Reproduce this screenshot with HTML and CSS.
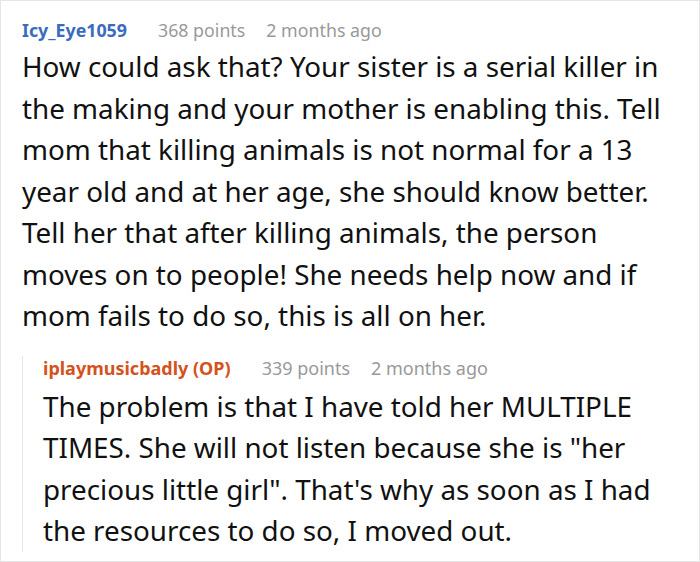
FILE: index.html
```html
<!DOCTYPE html>
<html>
<head>
<meta charset="utf-8">
<link rel="stylesheet" href="styles.css">
</head>
<body>
<div class="frame">
  <div class="comment">
    <div class="meta">
      <span class="user">Icy_Eye1059</span>
      <span class="info">368 points</span>
      <span class="info">2 months ago</span>
    </div>
    <p class="text">How could ask that? Your sister is a serial killer in the making and your mother is enabling this. Tell mom that killing animals is not normal for a 13 year old and at her age, she should know better. Tell her that after killing animals, the person moves on to people! She needs help now and if mom fails to do so, this is all on her.</p>
    <div class="reply">
      <div class="meta">
        <span class="user op">iplaymusicbadly (OP)</span>
        <span class="info">339 points</span>
        <span class="info">2 months ago</span>
      </div>
      <p class="text">The problem is that I have told her MULTIPLE TIMES. She will not listen because she is "her precious little girl". That's why as soon as I had the resources to do so, I moved out.</p>
    </div>
  </div>
</div>
</body>
</html>
```
FILE: styles.css
```css
html, body {
  margin: 0;
  padding: 0;
  background: #fff;
}
.frame {
  box-sizing: border-box;
  width: 700px;
  height: 562px;
  border: 1px solid #e6e6e6;
  overflow: hidden;
  font-family: "Noto Sans", "Open Sans", sans-serif;
}
.comment {
  padding: 17px 0 0 21px;
  width: 644px;
}
.meta {
  display: flex;
  gap: 21px;
  font-size: 17.8px;
  line-height: 24px;
  white-space: nowrap;
}
.user {
  font-weight: bold;
  color: #3a6bbf;
  margin-right: 10px;
}
.user.op {
  color: #d4521d;
}
.info {
  color: #999;
}
.text {
  margin: 4px 0 0;
  font-size: 27.8px;
  line-height: 41.5px;
  color: #111;
}
.reply {
  margin-top: 31.5px;
  padding-left: 20px;
  border-left: 1px solid #e4e4e4;
}
.reply .meta {
  margin-top: -12px;
  font-size: 18px;
}
.reply .text {
  margin: 5.5px 0 -8.5px;
}
```
